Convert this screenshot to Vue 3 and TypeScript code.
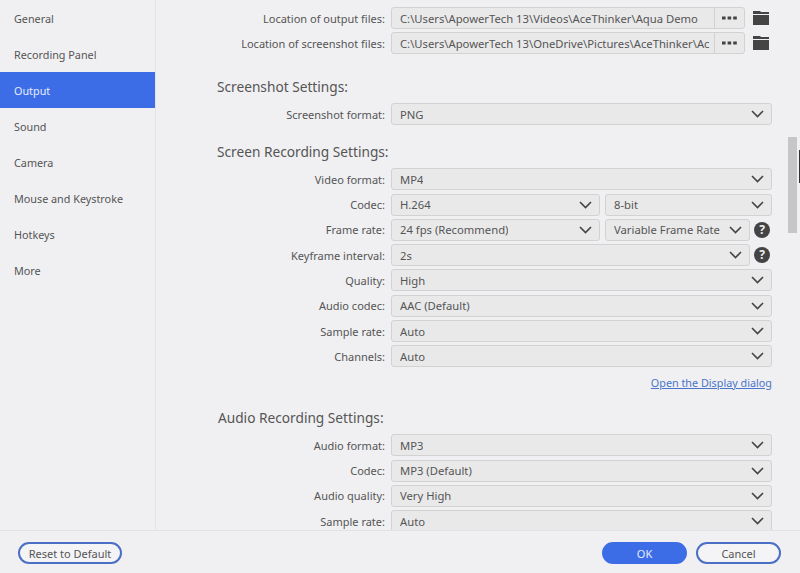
<script setup lang="ts">
interface Field {
  kind: 'select' | 'path'
  value: string
  grow?: number
  help?: boolean
}
interface Row {
  label: string
  fields: Field[]
}

const navItems = ['General', 'Recording Panel', 'Output', 'Sound', 'Camera', 'Mouse and Keystroke', 'Hotkeys', 'More']
const activeNav = 'Output'

function sel(label: string, value: string, help = false): Row {
  return { label, fields: [{ kind: 'select', value, help }] }
}

const pathRows: Row[] = [
  { label: 'Location of output files:', fields: [{ kind: 'path', value: 'C:\\Users\\ApowerTech 13\\Videos\\AceThinker\\Aqua Demo' }] },
  { label: 'Location of screenshot files:', fields: [{ kind: 'path', value: 'C:\\Users\\ApowerTech 13\\OneDrive\\Pictures\\AceThinker\\Ac' }] },
]
const screenshotRows: Row[] = [sel('Screenshot format:', 'PNG')]
const recordingRows: Row[] = [
  sel('Video format:', 'MP4'),
  { label: 'Codec:', fields: [{ kind: 'select', value: 'H.264', grow: 209 }, { kind: 'select', value: '8-bit', grow: 167 }] },
  {
    label: 'Frame rate:',
    fields: [
      { kind: 'select', value: '24 fps (Recommend)', grow: 209 },
      { kind: 'select', value: 'Variable Frame Rate', grow: 167, help: true },
    ],
  },
  sel('Keyframe interval:', '2s', true),
  sel('Quality:', 'High'),
  sel('Audio codec:', 'AAC (Default)'),
  sel('Sample rate:', 'Auto'),
  sel('Channels:', 'Auto'),
]
const audioRows: Row[] = [
  sel('Audio format:', 'MP3'),
  sel('Codec:', 'MP3 (Default)'),
  sel('Audio quality:', 'Very High'),
  sel('Sample rate:', 'Auto'),
]

const sections: { title?: string; rows: Row[]; link?: string; cls: string }[] = [
  { rows: pathRows, cls: 'sec-paths' },
  { title: 'Screenshot Settings:', rows: screenshotRows, cls: 'sec-shot' },
  { title: 'Screen Recording Settings:', rows: recordingRows, link: 'Open the Display dialog', cls: 'sec-rec' },
  { title: 'Audio Recording Settings:', rows: audioRows, cls: 'sec-audio' },
]
</script>

<template>
  <div class="app">
    <div class="body">
      <nav class="sidebar">
        <div v-for="item in navItems" :key="item" class="nav-item" :class="{ active: item === activeNav }">{{ item }}</div>
      </nav>
      <main class="content">
        <section v-for="s in sections" :key="s.cls" :class="s.cls">
          <h2 v-if="s.title" class="heading">{{ s.title }}</h2>
          <div v-for="row in s.rows" :key="row.label" class="row">
            <label class="label">{{ row.label }}</label>
            <div class="controls">
              <template v-for="f in row.fields" :key="f.value">
                <div v-if="f.kind === 'path'" class="path-wrap">
                  <div class="path">
                    <span class="path-text">{{ f.value }}</span>
                    <span class="dots">
                      <svg width="15" height="4" viewBox="0 0 15 4"><rect x="0" y="0.5" width="3.6" height="3" /><rect x="5.6" y="0.5" width="3.6" height="3" /><rect x="11.2" y="0.5" width="3.6" height="3" /></svg>
                    </span>
                  </div>
                  <svg class="folder" width="16" height="14" viewBox="0 0 16 14">
                    <path d="M0 0h7l1 1h8v2H0z" />
                    <path d="M0 4h16v10H0z" />
                  </svg>
                </div>
                <div v-else class="select-wrap" :style="f.grow ? { flex: `${f.grow} 1 0` } : undefined">
                  <div class="select">
                    <span class="select-text">{{ f.value }}</span>
                    <svg class="chev" width="13" height="8" viewBox="0 0 13 8"><path d="M1 1l5.5 5.5L12 1" /></svg>
                  </div>
                  <span v-if="f.help" class="help">?</span>
                </div>
              </template>
            </div>
          </div>
          <div v-if="s.link" class="link-row"><a class="link">{{ s.link }}</a></div>
        </section>
        <div class="scrollbar"></div>
        <div class="edge-mark"></div>
      </main>
    </div>
    <footer class="footer">
      <button class="btn reset">Reset to Default</button>
      <div class="right">
        <button class="btn primary">OK</button>
        <button class="btn outline">Cancel</button>
      </div>
    </footer>
  </div>
</template>

<style>
html, body { margin: 0; padding: 0; background: #f0f0f2; }
</style>

<style scoped>
.app {
  width: 800px;
  height: 573px;
  display: flex;
  flex-direction: column;
  overflow: hidden;
  background: #f0f0f2;
  color: #555;
  font-family: "Noto Sans", "DejaVu Sans", sans-serif;
  font-size: 11px;
}
.body { flex: 1; display: flex; min-height: 0; }
.sidebar { width: 155px; flex: none; border-right: 1px solid #e4e4e6; }
.nav-item { height: 36px; line-height: 37px; padding-left: 14px; white-space: nowrap; font-size: 10.8px; }
.nav-item.active { background: #3d6de6; color: #e6edfc; }
.content { flex: 1; position: relative; overflow: hidden; padding-top: 7px; }
.heading {
  margin: 0 0 6px 61px;
  height: 20px;
  line-height: 20px;
  font-size: 13.7px;
  font-weight: 400;
  color: #555;
}
.sec-shot { margin-top: 23px; }
.sec-rec { margin-top: 17px; }
.sec-audio { margin-top: 15px; }
.sec-audio .heading { margin-left: 62px; }
.row {
  display: grid;
  grid-template-columns: 229px 381px;
  column-gap: 6px;
  height: 22px;
  margin-bottom: 3.3px;
  align-items: center;
}
.label { text-align: right; white-space: nowrap; }
.controls { display: flex; gap: 5px; min-width: 0; }
.select-wrap { flex: 1 1 0; display: flex; align-items: center; min-width: 0; }
.select {
  flex: 1;
  min-width: 0;
  height: 22px;
  box-sizing: border-box;
  display: flex;
  align-items: center;
  justify-content: space-between;
  padding: 0 7px 0 8px;
  background: #e9e9ea;
  border: 1px solid #d2d2d2;
  border-radius: 3px;
  font-size: 11.25px;
}
.select-text { white-space: nowrap; overflow: hidden; }
.chev { flex: none; fill: none; stroke: #444; stroke-width: 1.6; }
.help {
  flex: none;
  width: 16px;
  height: 16px;
  margin: 0 2px 0 4px;
  border-radius: 50%;
  background: #444;
  color: #f0f0f2;
  font-size: 12px;
  font-weight: 700;
  line-height: 16px;
  text-align: center;
}
.path-wrap { flex: 1; display: flex; align-items: center; min-width: 0; }
.path {
  width: 354px;
  height: 22px;
  box-sizing: border-box;
  display: flex;
  align-items: center;
  background: #e9e9ea;
  border: 1px solid #d2d2d2;
  border-radius: 3px;
  font-size: 11.25px;
}
.path-text { flex: 1; min-width: 0; padding: 0 0 0 8px; white-space: nowrap; }
.dots {
  flex: none;
  width: 29px;
  height: 20px;
  display: flex;
  align-items: center;
  justify-content: center;
  border-left: 1px solid #d2d2d2;
}
.dots svg { fill: #444; }
.folder { flex: none; margin-left: 8px; fill: #444; }
.link-row { height: 22px; width: 616px; display: flex; align-items: center; justify-content: flex-end; margin-top: 4px; font-size: 10.8px; }
.link { color: #4a74c9; text-decoration: underline; }
.scrollbar { position: absolute; left: 632px; top: 137px; width: 9px; height: 96px; background: #c6c6c8; }
.edge-mark { position: absolute; left: 643px; top: 150px; width: 1px; height: 33px; background: #333; }
.footer {
  height: 43px;
  flex: none;
  box-sizing: border-box;
  border-top: 1px solid #e2e2e4;
  display: flex;
  align-items: center;
  justify-content: space-between;
  padding: 2px 19px 0 18px;
}
.right { display: flex; gap: 9px; }
.btn {
  height: 22px;
  box-sizing: border-box;
  border-radius: 11px;
  border: 2px solid #4a6fc4;
  background: #f4f4f6;
  color: #555;
  font: inherit;
  padding: 0;
  cursor: pointer;
}
.reset { width: 104px; }
.primary { width: 85px; background: #3d6de6; border-color: #3d6de6; color: #e6edfc; }
.outline { width: 85px; }
</style>
